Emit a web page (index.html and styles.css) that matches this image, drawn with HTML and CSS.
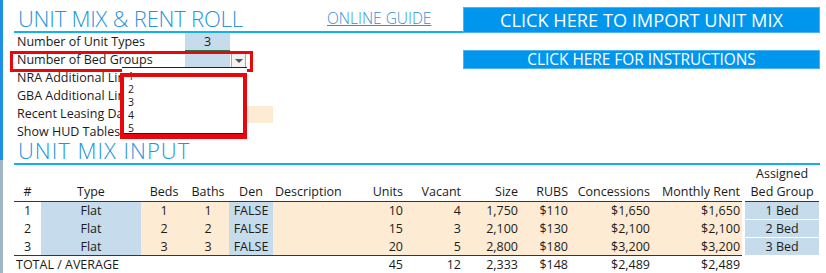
FILE: index.html
```html
<!DOCTYPE html>
<html lang="en">
<head>
  <meta charset="UTF-8" />
  <title>Unit Mix &amp; Rent Roll</title>
  <link rel="stylesheet" href="styles.css">
</head>
<body>

  <div class="sheet">
    <div class="top">
      <div class="left">
        <div class="title-row">
          <h1 class="title">UNIT MIX &amp; RENT ROLL</h1>
          <a class="guide" href="#">ONLINE GUIDE</a>
        </div>

        <div class="inputs">
          <div class="label">Number of Unit Types</div>
          <div class="val blue">3</div>
          <div></div>

          <div class="label">Number of Bed Groups</div>
          <div class="val blue selected"></div>
          <div class="arrow"><span></span></div>

          <div class="label">NRA Additional Lines</div>
          <div class="val"></div>
          <div></div>

          <div class="label">GBA Additional Lines</div>
          <div class="val"></div>
          <div></div>

          <div class="label">Recent Leasing Date</div>
          <div class="val peach wide"></div>

          <div class="label">Show HUD Tables</div>
          <div class="val">No</div>
          <div></div>

          <div class="mark mark-row"></div>
          <div class="dropdown">
            <div>1</div>
            <div>2</div>
            <div>3</div>
            <div>4</div>
            <div>5</div>
          </div>
          <div class="mark mark-list"></div>
        </div>
      </div>

      <div class="right">
        <button class="btn big">CLICK HERE TO IMPORT UNIT MIX</button>
        <button class="btn small">CLICK HERE FOR INSTRUCTIONS</button>
      </div>
    </div>

    <h2 class="section">UNIT MIX INPUT</h2>

    <table class="mix">
      <colgroup>
        <col style="width:27px">
        <col style="width:100px">
        <col style="width:46px">
        <col style="width:42px">
        <col style="width:44px">
        <col style="width:92px">
        <col style="width:40px">
        <col style="width:58px">
        <col style="width:57px">
        <col style="width:50px">
        <col style="width:82px">
        <col style="width:90px">
        <col style="width:3px">
        <col style="width:74px">
      </colgroup>
      <thead>
        <tr class="head1">
          <th colspan="12"></th>
          <th class="gap"></th>
          <th class="c">Assigned</th>
        </tr>
        <tr class="head2">
          <th class="c">#</th>
          <th class="c">Type</th>
          <th class="c">Beds</th>
          <th class="c">Baths</th>
          <th class="c">Den</th>
          <th class="l">Description</th>
          <th class="r">Units</th>
          <th class="r">Vacant</th>
          <th class="r">Size</th>
          <th class="r">RUBS</th>
          <th class="r">Concessions</th>
          <th class="r">Monthly Rent</th>
          <th class="gap"></th>
          <th class="c">Bed Group</th>
        </tr>
      </thead>
      <tbody>
        <tr>
          <td class="c">1</td>
          <td class="c blue">Flat</td>
          <td class="c peach">1</td>
          <td class="c peach">1</td>
          <td class="c blue">FALSE</td>
          <td class="peach"></td>
          <td class="r peach">10</td>
          <td class="r peach">4</td>
          <td class="r peach">1,750</td>
          <td class="r peach">$110</td>
          <td class="r peach">$1,650</td>
          <td class="r peach">$1,650</td>
          <td class="gap"></td>
          <td class="c group">1 Bed</td>
        </tr>
        <tr>
          <td class="c">2</td>
          <td class="c blue">Flat</td>
          <td class="c peach">2</td>
          <td class="c peach">2</td>
          <td class="c blue">FALSE</td>
          <td class="peach"></td>
          <td class="r peach">15</td>
          <td class="r peach">3</td>
          <td class="r peach">2,100</td>
          <td class="r peach">$130</td>
          <td class="r peach">$2,100</td>
          <td class="r peach">$2,100</td>
          <td class="gap"></td>
          <td class="c group">2 Bed</td>
        </tr>
        <tr>
          <td class="c">3</td>
          <td class="c blue">Flat</td>
          <td class="c peach">3</td>
          <td class="c peach">3</td>
          <td class="c blue">FALSE</td>
          <td class="peach"></td>
          <td class="r peach">20</td>
          <td class="r peach">5</td>
          <td class="r peach">2,800</td>
          <td class="r peach">$180</td>
          <td class="r peach">$3,200</td>
          <td class="r peach">$3,200</td>
          <td class="gap"></td>
          <td class="c group">3 Bed</td>
        </tr>
      </tbody>
      <tfoot>
        <tr>
          <td colspan="6" class="l">TOTAL / AVERAGE</td>
          <td class="r">45</td>
          <td class="r">12</td>
          <td class="r">2,333</td>
          <td class="r">$148</td>
          <td class="r">$2,489</td>
          <td class="r">$2,489</td>
          <td class="gap"></td>
          <td class="tail"></td>
        </tr>
      </tfoot>
    </table>
  </div>

</body>
</html>
```

FILE: styles.css
```css
body {
  margin: 0;
  font-family: "Open Sans", "Noto Sans", sans-serif;
  color: #1b1b1b;
  background:
    linear-gradient(#1f8fe6, #1f8fe6) 0 0 / 3px 160px no-repeat,
    linear-gradient(#9fb6c4, #9fb6c4) 0 160px / 3px 113px no-repeat,
    #fff;
  height: 273px;
  overflow: hidden;
}

.sheet {
  padding-left: 14px;
  width: 806px;
}

.top {
  display: flex;
}

.left {
  width: 449px;
  position: relative;
}

.title-row {
  height: 31px;
  border-bottom: 2px solid #13b0ee;
  display: flex;
  align-items: flex-start;
}

.title {
  margin: 5px 0 0 4px;
  font-size: 22px;
  font-weight: 300;
  color: #2494dc;
  line-height: 27px;
  letter-spacing: -0.2px;
  width: 309px;
}

.guide {
  margin-top: 8px;
  font-size: 15.5px;
  font-weight: 300;
  color: #2f8fd6;
  line-height: 20px;
}

.inputs {
  display: grid;
  grid-template-columns: 171px 45px 16px 1fr;
  grid-auto-rows: 18px;
  font-size: 12.5px;
  line-height: 18px;
  position: relative;
}

.inputs .label {
  grid-column: 1;
  padding-left: 3px;
}

.val {
  grid-column: 2;
  text-align: center;
}

.val.wide {
  grid-column: 2 / span 2;
  margin-right: -27px;
  margin-top: 1px;
}

.blue {
  background: #c6dcec;
}

.peach {
  background: #fdebd3;
}

.selected {
  border-top: 2px solid #2a7245;
  margin-top: -1px;
  margin-bottom: 1px;
}

.arrow {
  grid-column: 3;
  margin: 2px 0 1px 1px;
  background: #f3f3f3;
  border: 1px solid #a8a8a8;
  display: flex;
  align-items: center;
  justify-content: center;
}

.arrow span {
  width: 0;
  height: 0;
  border-left: 4px solid transparent;
  border-right: 4px solid transparent;
  border-top: 4px solid #555;
}

.dropdown {
  position: absolute;
  left: 108px;
  top: 34px;
  width: 125px;
  height: 68px;
  background: #fff;
  border-top: 1px solid #222;
  border-bottom: 2px solid #222;
  font-size: 10.5px;
  line-height: 13px;
  padding: 2px 0 0 6px;
  box-sizing: border-box;
  overflow: hidden;
}

.mark {
  position: absolute;
  border: 3px solid #e8070d;
  box-sizing: border-box;
}

.mark-row {
  left: -4px;
  top: 18px;
  width: 243px;
  height: 21px;
}

.mark-list {
  left: 106px;
  top: 40px;
  width: 127px;
  height: 66px;
  border-width: 4px 4px 5px 4px;
}

.right {
  width: 357px;
  display: flex;
  flex-direction: column;
}

.btn {
  font-family: inherit;
  background: #0096ee;
  border: 1px solid #4bb4f0;
  color: #fff;
  font-weight: 400;
  padding: 0;
  cursor: pointer;
}

.btn.big {
  margin-top: 7px;
  height: 26px;
  font-size: 18.2px;
  line-height: 24px;
}

.btn.small {
  margin-top: 17px;
  height: 19px;
  font-size: 15.4px;
  line-height: 17px;
}

.section {
  margin: 0;
  height: 22px;
  border-bottom: 2px solid #13b0ee;
  font-size: 22px;
  font-weight: 300;
  color: #2494dc;
  line-height: 19px;
  padding-left: 4px;
  letter-spacing: 1px;
}

.mix {
  border-collapse: collapse;
  table-layout: fixed;
  width: 805px;
  font-size: 12.5px;
}

.mix th,
.mix td {
  padding: 0 2px;
  font-weight: 400;
  white-space: nowrap;
  overflow: hidden;
}

.mix th {
  height: 18px;
  line-height: 18px;
}

.head2 th {
  border-bottom: 1px solid #1f3a5a;
  line-height: 16px;
}

.mix td {
  height: 17px;
  line-height: 17px;
}

.mix .gap {
  border: none;
  background: #fff;
}

.c {
  text-align: center;
}

.l {
  text-align: left;
}

.r {
  text-align: right;
}

.group {
  background: #c6dcec;
  border-bottom: 1px solid #fff;
}

tbody tr:last-child td {
  border-bottom: 1px solid #1f3a5a;
}

tbody tr:last-child td.gap {
  border-bottom: none;
}

tbody tr:last-child td.group {
  border-bottom: 1px solid #fff;
}

tfoot td {
  height: 18px;
  border-bottom: 3px solid #1f3a5a;
}

tfoot td.tail {
  border-bottom: 1px solid #b0b0b0;
}
```
